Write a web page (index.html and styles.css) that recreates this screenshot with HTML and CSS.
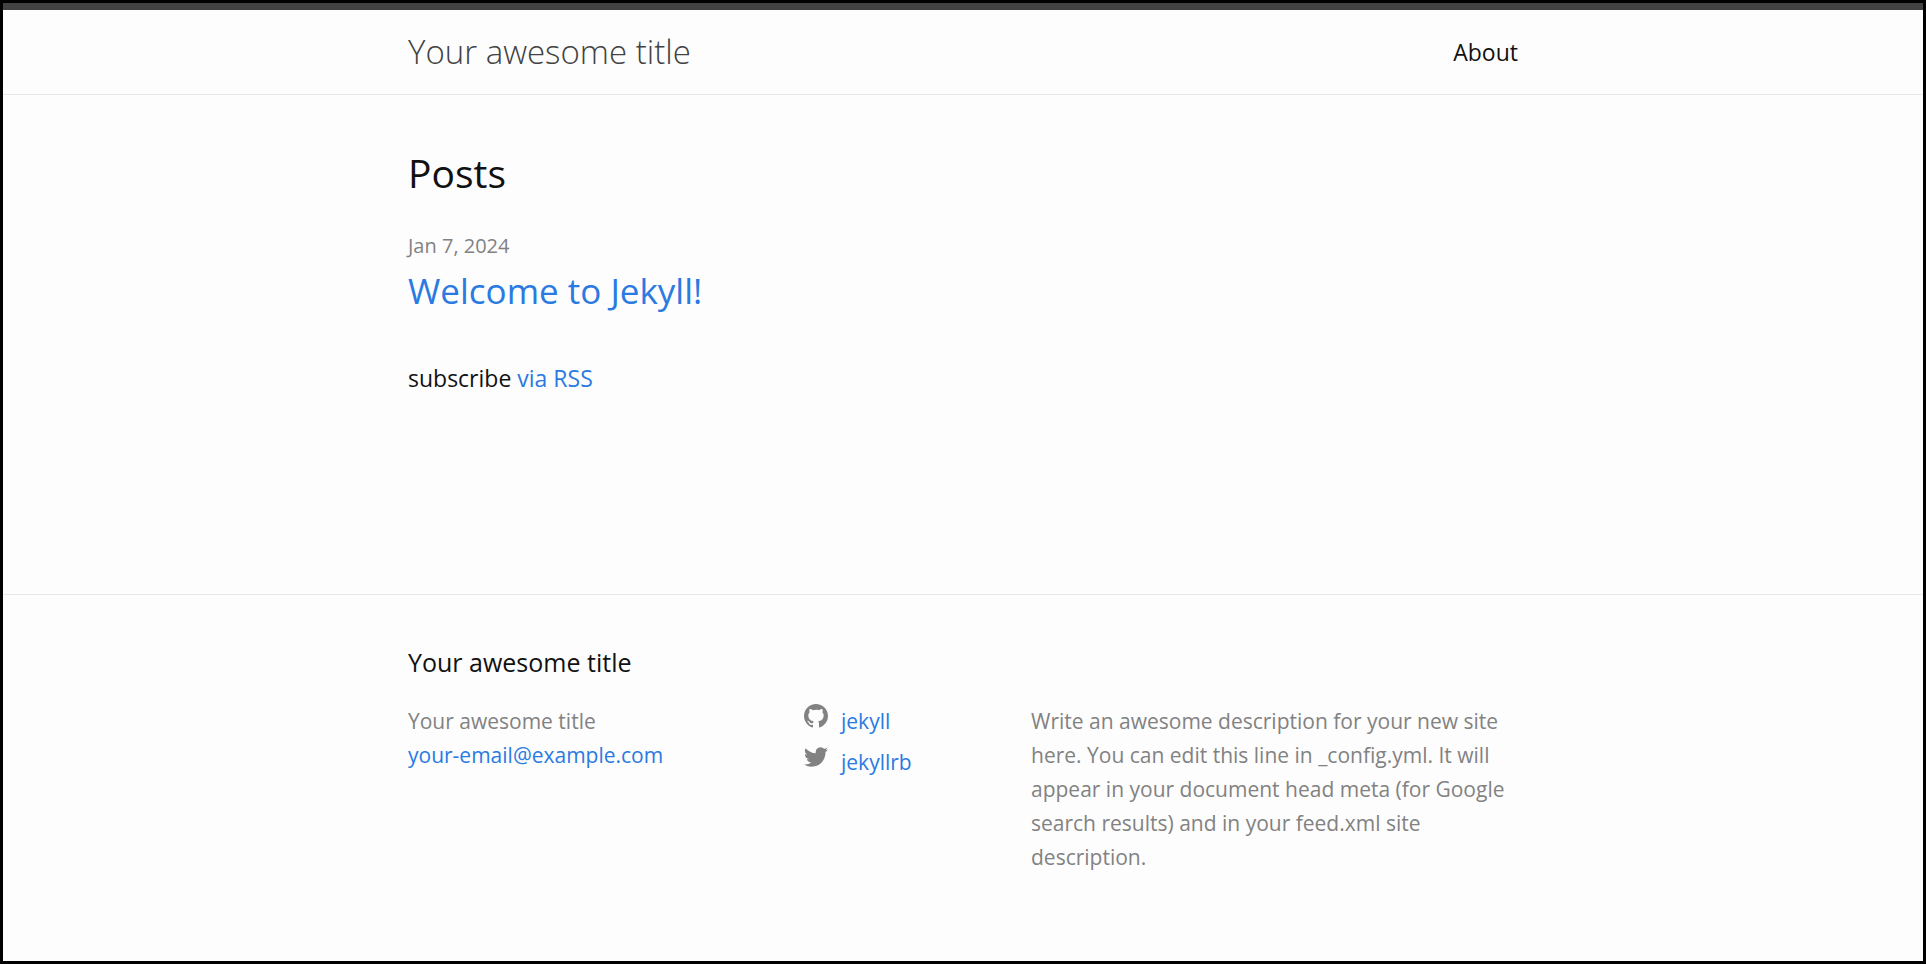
FILE: index.html
```html
<!DOCTYPE html>
<html lang="en">
<head>
<meta charset="utf-8">
<meta name="viewport" content="width=device-width, initial-scale=1">
<title>Your awesome title</title>
<link rel="stylesheet" href="styles.css">
</head>
<body>
<header class="site-header">
  <div class="wrapper header-row">
    <a class="site-title" href="#">Your awesome title</a>
    <nav><a class="page-link" href="#">About</a></nav>
  </div>
</header>
<main class="page-content">
  <div class="wrapper">
    <h1 class="list-heading">Posts</h1>
    <ul class="post-list">
      <li>
        <span class="post-meta">Jan 7, 2024</span>
        <h2 class="post-title"><a href="#">Welcome to Jekyll!</a></h2>
      </li>
    </ul>
    <p class="subscribe">subscribe <a href="#">via RSS</a></p>
  </div>
</main>
<footer class="site-footer">
  <div class="wrapper">
    <h2 class="footer-heading">Your awesome title</h2>
    <div class="footer-cols">
      <ul class="contact-list">
        <li>Your awesome title</li>
        <li><a href="#">your-email@example.com</a></li>
      </ul>
      <ul class="social-list">
        <li><a href="#"><svg class="icon" viewBox="0 0 16 16" aria-hidden="true"><path d="M8 0C3.58 0 0 3.582 0 8c0 3.535 2.292 6.533 5.47 7.59.4.075.547-.172.547-.385 0-.19-.007-.693-.01-1.36-2.226.483-2.695-1.073-2.695-1.073-.364-.924-.889-1.17-.889-1.17-.726-.496.055-.486.055-.486.803.056 1.226.824 1.226.824.714 1.223 1.873.87 2.329.665.072-.517.279-.87.508-1.07-1.777-.202-3.645-.888-3.645-3.953 0-.873.312-1.587.823-2.147-.083-.202-.357-1.015.078-2.117 0 0 .672-.215 2.2.82a7.66 7.66 0 0 1 2.003-.27c.68.003 1.364.092 2.003.27 1.527-1.035 2.198-.82 2.198-.82.436 1.102.162 1.915.08 2.117.512.56.822 1.274.822 2.147 0 3.073-1.871 3.749-3.653 3.947.287.247.543.735.543 1.481 0 1.07-.01 1.933-.01 2.195 0 .215.144.464.55.386A8 8 0 0 0 16 8c0-4.418-3.582-8-8-8z"/></svg><span>jekyll</span></a></li>
        <li><a href="#"><svg class="icon" viewBox="0 0 16 16" aria-hidden="true"><path d="M15.969 3.058c-.586.26-1.217.436-1.878.515.675-.405 1.194-1.045 1.438-1.809-.632.375-1.332.647-2.076.793a3.27 3.27 0 0 0-5.57 2.98C5.165 5.402 2.756 4.101 1.144 2.124a3.27 3.27 0 0 0 1.011 4.364 3.24 3.24 0 0 1-1.48-.409v.041a3.27 3.27 0 0 0 2.622 3.204 3.28 3.28 0 0 1-1.476.056 3.27 3.27 0 0 0 3.053 2.269 6.56 6.56 0 0 1-4.84 1.354 9.25 9.25 0 0 0 5.011 1.469c6.013 0 9.301-4.981 9.301-9.301 0-.142-.003-.283-.009-.423a6.64 6.64 0 0 0 1.632-1.69z"/></svg><span>jekyllrb</span></a></li>
      </ul>
      <p class="description">Write an awesome description for your new site here. You can edit this line in _config.yml. It will appear in your document head meta (for Google search results) and in your feed.xml site description.</p>
    </div>
  </div>
</footer>
</body>
</html>
```
FILE: styles.css
```css
* {
  box-sizing: border-box;
  margin: 0;
  padding: 0;
}

body {
  display: flex;
  flex-direction: column;
  min-height: 100vh;
  border: 3px solid #000;
  background: #fdfdfd;
  color: #111;
  font: 400 23px/36px "Segoe UI", "Open Sans", "Noto Sans", sans-serif;
}

a {
  color: #2a7ae2;
  text-decoration: none;
}

ul {
  list-style: none;
}

.wrapper {
  width: 100%;
  max-width: 1200px;
  margin: 0 auto;
  padding: 0 45px;
}

.site-header {
  border-top: 7px solid #424242;
  border-bottom: 1px solid #e8e8e8;
}

.header-row {
  display: flex;
  align-items: center;
  justify-content: space-between;
  min-height: 84px;
}

.site-title {
  color: #424242;
  font-size: 33px;
  font-weight: 300;
  line-height: 48px;
}

.page-link {
  color: #111;
}

.page-content {
  flex: 1;
  padding: 45px 0;
}

.list-heading {
  font-size: 39px;
  font-weight: 400;
  line-height: 66px;
}

.post-list {
  padding: 23px 0 41px;
}

.post-meta {
  display: block;
  color: #828282;
  font-size: 20px;
  line-height: 34px;
}

.post-title {
  font-size: 35px;
  font-weight: 400;
  line-height: 56px;
}

.site-footer {
  padding: 45px 0 87px;
  border-top: 1px solid #e8e8e8;
}

.footer-heading {
  margin-bottom: 20px;
  font-size: 25px;
  font-weight: 400;
  line-height: 44px;
}

.footer-cols {
  display: grid;
  grid-template-columns: 396fr 227fr 487fr;
  color: #828282;
  font-size: 21px;
  line-height: 34px;
}

.social-list {
  display: grid;
  align-content: start;
  gap: 7px;
}

.social-list a {
  display: flex;
  gap: 13px;
}

.icon {
  width: 24px;
  height: 24px;
  fill: #828282;
}
```
